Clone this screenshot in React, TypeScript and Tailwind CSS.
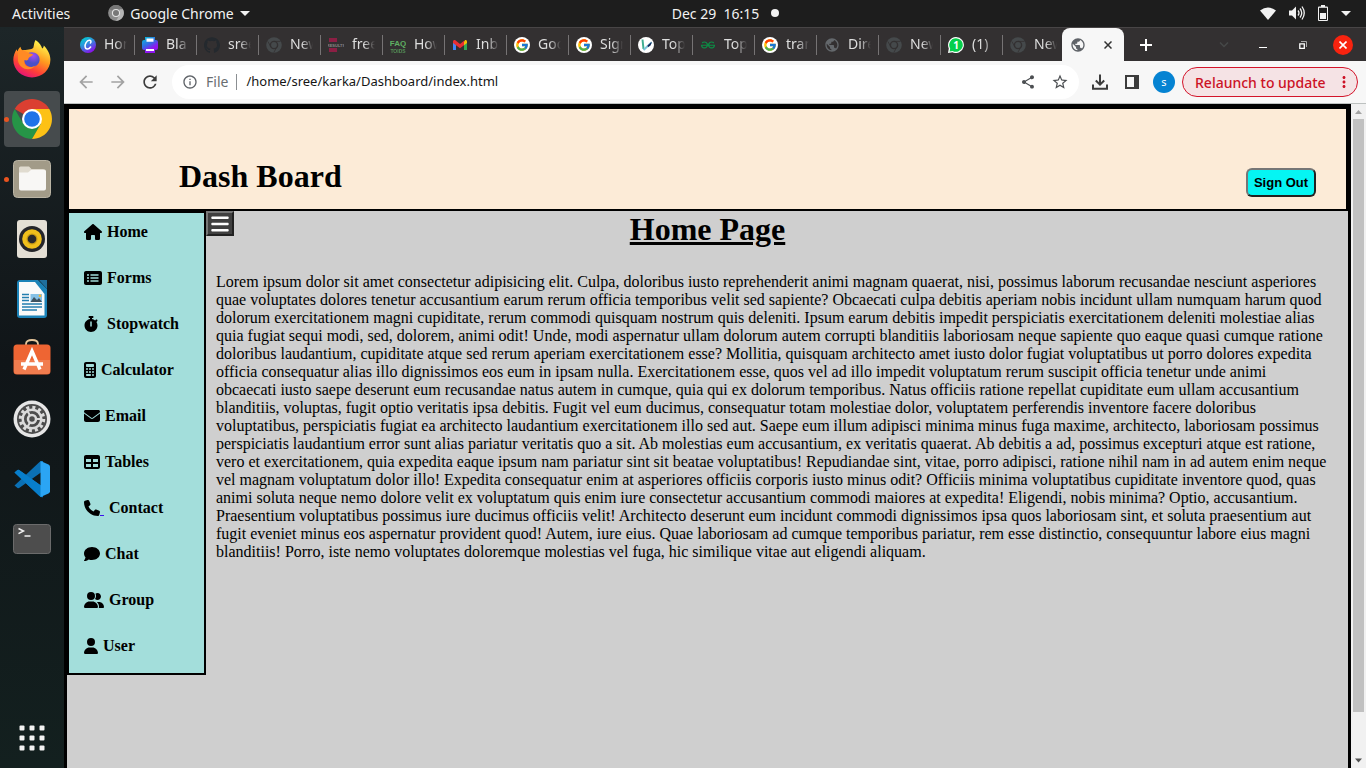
import type { ReactNode } from "react";
import {
  FaBars, FaCalculator, FaComment, FaEnvelope, FaHouse, FaPhone,
  FaRectangleList, FaStopwatch, FaTable, FaUser, FaUserGroup,
} from "react-icons/fa6";
import { FcGoogle } from "react-icons/fc";
import { SiGithub, SiGeeksforgeeks } from "react-icons/si";
import {
  MdArrowBack, MdArrowForward, MdInfoOutline, MdMoreVert, MdPublic, MdRefresh, MdShare, MdStarBorder,
} from "react-icons/md";

function ChromeMono({ className }: { className: string }) {
  return (
    <svg viewBox="0 0 16 16" className={className} aria-hidden="true">
      <circle cx="8" cy="8" r="7.8" fill="currentColor" />
      <g fill="none" stroke="#333031">
        <circle cx="8" cy="8" r="3.6" strokeWidth="1.400" />
        <path d="M8 4.400h6.500M4.900 9.800 1.800 4.400M11 9.800 7.800 15.500" strokeWidth=".8" />
      </g>
    </svg>
  );
}

function ChromeAppIcon() {
  return (
    <svg viewBox="0 0 16 16" className="size-4" aria-hidden="true">
      <circle cx="8" cy="8" r="7.900" fill="#8c8c8c" />
      <path d="M8 8 1.200 4A7.900 7.900 0 0 1 14.800 4z" fill="#777" />
      <path d="M14.900 4.200A7.900 7.900 0 0 1 8 15.900L11.500 10V4.200z" fill="#b4b4b4" />
      <circle cx="8" cy="8" r="4.100" fill="#e4e4e4" />
      <circle cx="8" cy="8" r="3" fill="#777" />
    </svg>
  );
}

function CanvaIcon() {
  return (
    <svg viewBox="0 0 16 16" className="size-4">
      <defs>
        <linearGradient id="canva" x1="0" y1="0" x2=".6" y2="1">
          <stop offset=".1" stopColor="#00cfd2" />
          <stop offset=".5" stopColor="#2f8edc" />
          <stop offset="1" stopColor="#8a10ea" />
        </linearGradient>
      </defs>
      <circle cx="8" cy="8" r="8" fill="url(#canva)" />
      <path d="M10.400 6c1.200-1.200.5-2.900-1.200-2.700C6.700 3.600 4.800 7 5.100 9.700c.3 3 3.600 3.200 5.500.3" fill="none" stroke="#fff" strokeWidth="1.500" strokeLinecap="round" />
    </svg>
  );
}

function PrinterIcon() {
  return (
    <svg viewBox="0 0 16 16" className="size-4">
      <defs>
        <linearGradient id="print" x1="0" y1="0" x2=".6" y2="1">
          <stop offset="0" stopColor="#00c8d6" />
          <stop offset=".5" stopColor="#3569e4" />
          <stop offset=".8" stopColor="#8f16ef" />
        </linearGradient>
      </defs>
      <path d="M3 0h10v3h1q2 0 2 2v6q0 2-2 2h-1v3H3v-3H2q-2 0-2-2V5q0-2 2-2h1z" fill="url(#print)" />
      <path d="M4.500 1.500h7v3.300h-7zM4 12h8v2H4z" fill="#fff" />
    </svg>
  );
}

function GmailIcon() {
  return (
    <svg viewBox="0 0 16 16" className="size-4">
      <path d="M1 4v9h3V7z" fill="#4285f4" />
      <path d="M15 4v9h-3V7z" fill="#34a853" />
      <path d="M12 4.500 13.200 3q1.800-.5 1.800 1.500V6l-3 2.300z" fill="#fbbc04" />
      <path d="M1 4.500Q1 2.500 3 3l5 4 4-3.200v4.500l-4 3-7-5.200z" fill="#ea2e32" />
    </svg>
  );
}

function GoogleIcon() {
  return (
    <span className="flex size-4 items-center justify-center rounded-full bg-white">
      <FcGoogle className="size-3.5" />
    </span>
  );
}

function LeafIcon() {
  return (
    <svg viewBox="0 0 16 16" className="size-4">
      <circle cx="8" cy="8" r="8" fill="#fff" />
      <path d="M4.500 2.500 5.500 12" fill="none" stroke="#3fae93" strokeWidth="2" />
      <path d="M5.500 13 13.500 5.500" stroke="#7cc4da" strokeWidth="2" />
      <path d="m9.500 8.500 4.500-4-1.500 4-2.500 1.800z" fill="#14285a" />
    </svg>
  );
}

function WhatsIcon() {
  return (
    <svg viewBox="0 0 16 16" className="size-4">
      <path d="M8 0a8 8 0 1 1-3.600 15.200L0 16l.8-4.600A8 8 0 0 1 8 0Z" fill="#fff" />
      <path d="M8 1.200a6.800 6.800 0 1 1-3.400 12.700l-3 .6.600-3A6.800 6.800 0 0 1 8 1.200Z" fill="#05cf4b" />
      <text x="8.200" y="12" fill="#fff" fontSize="10" fontWeight="700" fontFamily="Noto Sans" textAnchor="middle">1</text>
    </svg>
  );
}

function FaqIcon() {
  return (
    <svg viewBox="0 0 16 16" className="size-4">
      <g fill="#5fae62" fontFamily="Liberation Sans" fontWeight="700" textAnchor="middle">
        <text x="8" y="9" fontSize="8">FAQ</text>
        <text x="8" y="15.500" fontSize="5" opacity=".75">TOIDS</text>
      </g>
    </svg>
  );
}

function ResultsIcon() {
  return (
    <svg viewBox="0 0 16 16" className="size-4">
      <path d="M1 1h8v4H1zM1 11h8v4H1z" fill="#8c1f44" />
      <text x="8" y="10" fill="#8a8587" fontSize="4" fontWeight="700" fontFamily="Liberation Sans" textAnchor="middle">RESULTS</text>
    </svg>
  );
}

const dimChrome = <ChromeMono className="size-4 text-[#45494b]" />;

const tabs: { icon: ReactNode; title: string }[] = [
  { icon: <CanvaIcon />, title: "Home" },
  { icon: <PrinterIcon />, title: "Bla" },
  { icon: <SiGithub className="size-4 text-[#24292e]" />, title: "sree" },
  { icon: dimChrome, title: "New" },
  { icon: <ResultsIcon />, title: "free" },
  { icon: <FaqIcon />, title: "How" },
  { icon: <GmailIcon />, title: "Inb" },
  { icon: <GoogleIcon />, title: "Goo" },
  { icon: <GoogleIcon />, title: "Sign" },
  { icon: <LeafIcon />, title: "Top" },
  { icon: <SiGeeksforgeeks className="size-3.5 text-[#0d8c45]" />, title: "Top" },
  { icon: <GoogleIcon />, title: "tran" },
  { icon: <MdPublic className="size-4 text-[#64686c]" />, title: "Dire" },
  { icon: dimChrome, title: "New" },
  { icon: <WhatsIcon />, title: "(1)" },
  { icon: dimChrome, title: "New" },
];

function TopBar() {
  return (
    <header className="grid h-[27px] shrink-0 grid-cols-3 items-center bg-[#1d1d1d] pr-[15px] pb-px pl-3 text-[14px] text-[#f2f2f2]">
      <div className="flex items-center">
        <button>Activities</button>
        <button className="ml-[38px] flex items-center gap-1.5">
          <ChromeAppIcon />
          Google Chrome
          <svg viewBox="0 0 10 5" className="h-[5px] w-2.5"><path d="M0 0h10L5 5z" fill="#f2f2f2" /></svg>
        </button>
      </div>
      <button className="flex items-center justify-center gap-3 pl-[88px] whitespace-pre">
        Dec 29  16:15
        <span className="size-2 rounded-full bg-[#f2f2f2]" />
      </button>
      <div className="flex items-center justify-end gap-[13px]">
        <svg viewBox="0 0 16 13" className="h-[13px] w-4"><path d="M0 3.500Q8-2.500 16 3.500L8 13z" fill="#f2f2f2" /></svg>
        <svg viewBox="0 0 16 16" className="size-4" fill="none" stroke="#f2f2f2" strokeWidth="1.300">
          <path d="M0 5.500h3L7 1.500v13l-4-4H0z" fill="#f2f2f2" stroke="none" />
          <path d="M9 5.500q2 2.500 0 5M11 3.500q3.500 4.500 0 9M13 1.500q4.500 6.500 0 13" />
        </svg>
        <svg viewBox="0 0 10 16" className="h-4 w-2.5">
          <path d="M3 0h4v1.500h2q1 0 1 1V15q0 1-1 1H1q-1 0-1-1V2.500q0-1 1-1h2z" fill="#f2f2f2" />
          <path d="M1 2.800h8V15H1z" fill="#1d1d1d" />
          <path d="M2 8h6v6H2z" fill="#f2f2f2" />
        </svg>
        <svg viewBox="0 0 10 5" className="h-[5px] w-2.5"><path d="M0 0h10L5 5z" fill="#f2f2f2" /></svg>
      </div>
    </header>
  );
}

const firefox = (
  <svg viewBox="0 0 40 40" className="size-10">
    <defs>
      <linearGradient id="fox" x1=".8" y1="0" x2=".3" y2="1">
        <stop offset=".1" stopColor="#fff04a" />
        <stop offset=".45" stopColor="#ff9a1f" />
        <stop offset=".75" stopColor="#ff4037" />
        <stop offset="1" stopColor="#e3107c" />
      </linearGradient>
      <radialGradient id="foxGlobe" cx=".6" cy=".25">
        <stop offset="0" stopColor="#a44df2" />
        <stop offset="1" stopColor="#4a50c8" />
      </radialGradient>
    </defs>
    <path d="M23.500 1c4 2.600 6 6 6.700 8.600 1-.8 1.500-2 1.600-3.200 4 4 6.600 9 6.600 14.400C38.400 31 30 38.500 20 38.500S1.300 31 1.300 20.800c0-4 1.500-7.500 3.200-10.600.3 1 .8 1.600 1.300 2 .4-1.800 1.300-3.200 2.700-4.400.2 1.500.8 2.500 1.800 3.400 4.200-.6 9.200-.4 11-2.500.8-2 .6-5.200 2.200-7.700Z" fill="url(#fox)" />
    <path d="M12.500 18c2-5 9-6.500 13-2.500 4.500 4.500 1.500 12.500-6 12.500-5 0-9-5-7-10Z" fill="url(#foxGlobe)" />
    <path d="M6 12c4-2 8 0 10.500 2 1.500.8 4 .8 4.500 1.200-.5 2.300-3.500 2.200-4.500 4 .2 2-2 2.800-4 1.700-1.500 6.100 6 9.600 11.500 5.100C19 33 8 31 6 22z" fill="#ff8a24" />
  </svg>
);

const chrome = (
  <svg viewBox="0 0 40 40" className="size-10">
    <path d="M20 20 2.700 10A20 20 0 0 1 37.300 10z" fill="#db3f31" />
    <path d="M2.700 10A20 20 0 0 0 20 40l9-15H11.500z" fill="#269547" />
    <path d="M37.300 10A20 20 0 0 1 20 40l8.700-15L20 10z" fill="#fdc115" />
    <circle cx="20" cy="20" r="10" fill="#fff" />
    <circle cx="20" cy="20" r="7.800" fill="#1f73e8" />
  </svg>
);

const files = (
  <svg viewBox="0 0 40 40" className="size-10">
    <rect x="1.500" y="1.500" width="37" height="37" rx="4" fill="#a29b88" stroke="#bab4a4" />
    <path d="M7 9q0-1.500 1.500-1.500h8.500l2.500 2.500H31q3 0 3 3v5H7z" fill="#e0dbcf" />
    <path d="M7 13.500h9l3-2.500h13.500q1.500 0 1.500 1.500v17q0 2-2 2H9q-2 0-2-2z" fill="#f8f7f5" />
  </svg>
);

const rhythmbox = (
  <svg viewBox="0 0 40 40" className="size-10">
    <rect x="5" y="1" width="30" height="38" rx="3" fill="#e4dfd5" />
    <circle cx="20" cy="20" r="13" fill="#25252a" />
    <circle cx="20" cy="20" r="9.800" fill="#f0bf1c" />
    <circle cx="20" cy="20" r="5.500" fill="#c79a16" />
    <circle cx="20" cy="20" r="4.300" fill="#29292b" />
  </svg>
);

const writer = (
  <svg viewBox="0 0 40 40" className="size-10">
    <path d="M5 4q0-3 3-3h18l9 9v26q0 3-3 3H8q-3 0-3-3z" fill="#1c83b8" />
    <path d="M27 1h8v9z" fill="#1f6f9d" />
    <path d="M7 3h16l9.500 12v21.500H7z" fill="#fafafa" />
    <g stroke="#247eaf" strokeWidth="1.400"><path d="M10 15.500h7M10 18.500h7M10 21.500h7M10 25h20M10 28h20M10 31h15" /></g>
    <path d="M18.500 15H30v8H18.500z" fill="#85c1e6" />
    <path d="m18.500 23 3.500-5 3 3 2-2 3 4z" fill="#3e5260" />
    <circle cx="28" cy="16.800" r="1.300" fill="#f3b42f" />
  </svg>
);

const software = (
  <svg viewBox="0 0 40 40" className="size-10">
    <path d="M14 8V5q0-4 6-4t6 4v3" fill="none" stroke="#e6c69b" strokeWidth="1.800" />
    <rect x="1.500" y="5.500" width="37" height="30" rx="3.500" fill="#ee6533" />
    <path d="M2 21h36v11q0 3-3 3H5q-3 0-3-3z" fill="#f17c4e" />
    <path d="m12 30.500 8-18.500 8 18.500M9 25h22" fill="none" stroke="#fff" strokeWidth="3.300" />
  </svg>
);

const settings = (
  <svg viewBox="0 0 40 40" className="size-10">
    <circle cx="20" cy="20" r="18.500" fill="#e6e6e6" />
    <circle cx="20" cy="20" r="15" fill="#4c4c4c" />
    <circle cx="20" cy="20" r="11.500" fill="none" stroke="#dadada" strokeWidth="3.500" strokeDasharray="3 3.020" />
    <circle cx="20" cy="20" r="9.300" fill="none" stroke="#dadada" strokeWidth="2.500" />
    <circle cx="20" cy="20" r="4" fill="none" stroke="#dadada" strokeWidth="2.500" />
    <path d="M24 20h6M18 16.500l-3-5.200M18 23.500l-3 5.200" stroke="#dadada" strokeWidth="2" />
  </svg>
);

const vscode = (
  <svg viewBox="0 0 40 40" className="size-10">
    <path d="m2.500 13.500 3-2.500q1-.5 2 .2L31 28v10q-2 .5-3.500-1z" fill="#087ecb" />
    <path d="m2.500 26.500 3 2.500q1 .5 2-.2L31 12V2q-2-.5-3.500 1z" fill="#0b70b4" />
    <path d="m2.500 13.500 3-2.500q1-.5 2 .2L31 28v10q-2 .5-3.500-1z" fill="#087ecb" />
    <path d="m28.500 2 8 3.500q1.500.8 1.500 2v25q0 1.200-1.500 2l-8 3.500z" fill="#2ba5f4" />
  </svg>
);

const terminal = (
  <svg viewBox="0 0 40 40" className="size-10">
    <rect x="1.500" y="5.500" width="37" height="29" rx="3" fill="#4d4d4d" stroke="#6b6b6b" />
    <path d="m6.500 9.500 5 2.500-5 2.700M12.500 17h6" fill="none" stroke="#f0f0f0" strokeWidth="1.500" />
  </svg>
);

const dockApps = [
  { name: "Firefox", icon: firefox, open: false, active: false },
  { name: "Chrome", icon: chrome, open: true, active: true },
  { name: "Files", icon: files, open: true, active: false },
  { name: "Rhythmbox", icon: rhythmbox, open: false, active: false },
  { name: "Writer", icon: writer, open: false, active: false },
  { name: "Software", icon: software, open: false, active: false },
  { name: "Settings", icon: settings, open: false, active: false },
  { name: "Code", icon: vscode, open: false, active: false },
  { name: "Terminal", icon: terminal, open: false, active: false },
];

function Dock() {
  return (
    <nav aria-label="Dock" className="flex w-16 shrink-0 flex-col items-center gap-1 bg-linear-to-b from-[#1d2628] via-[#101518] via-45% to-[#13201f] pt-1 pb-0.5">
      {dockApps.map((app) => (
        <button
          key={app.name}
          aria-label={app.name}
          className={`relative flex size-14 items-center justify-center rounded-sm ${app.active ? "bg-[#464b4d]" : ""}`}
        >
          {app.open && <span className="absolute left-0 size-[5px] rounded-full bg-[#e95420]" />}
          {app.icon}
        </button>
      ))}
      <button aria-label="Show applications" className="mt-auto flex size-14 items-center justify-center">
        <svg viewBox="0 0 26 26" className="size-[26px]" fill="#f2f2f2">
          {[0.5, 10.5, 20.5].map((y) => [0.5, 10.5, 20.5].map((x) => <rect key={`${x}-${y}`} x={x} y={y} width="5" height="5" rx="1" />))}
        </svg>
      </button>
    </nav>
  );
}

function TabStrip() {
  return (
    <div className="flex h-[34px] shrink-0 items-center border-t border-[#484546] bg-[#333031] pl-2 text-[14px] text-[#dedede]">
      {tabs.map((tab, i) => (
        <button
          key={i}
          className={`flex h-5 items-center gap-2 border-l pl-[7px] ${i === 0 ? "border-transparent" : "border-[#767374]"} ${i === tabs.length - 1 ? "w-[60px]" : "w-[62px]"}`}
        >
          <span className="flex size-4 shrink-0 items-center justify-center">{tab.icon}</span>
          <span className="w-[23px] overflow-hidden pb-0.5 text-left whitespace-nowrap [mask-image:linear-gradient(to_right,black_50%,transparent)]">
            {tab.title}
          </span>
        </button>
      ))}
      <div className="flex h-full w-[62px] items-center justify-between rounded-t-lg bg-[#f7f7f7] px-2">
        <MdPublic className="size-4 text-[#5f6368]" />
        <button aria-label="Close tab" className="flex size-4 items-center justify-center">
          <svg viewBox="0 0 8 8" className="size-2"><path d="m.5.5 7 7m0-7-7 7" stroke="#333" strokeWidth="1.500" /></svg>
        </button>
      </div>
      <button aria-label="New tab" className="ml-4">
        <svg viewBox="0 0 12 12" className="size-3"><path d="M6 0v12M0 6h12" stroke="#fff" strokeWidth="2" /></svg>
      </button>
      <div className="mr-[13px] ml-auto flex items-center">
        <button aria-label="Search tabs" className="mr-[30px]">
          <svg viewBox="0 0 10 6" className="h-1.5 w-2.5"><path d="m1 .5 4 4 4-4" fill="none" stroke="#464848" strokeWidth="1.500" /></svg>
        </button>
        <button aria-label="Minimize" className="mr-8">
          <svg viewBox="0 0 8 8" className="size-2"><path d="M0 6.500h8" stroke="#fff" /></svg>
        </button>
        <button aria-label="Restore" className="mr-[26px]">
          <svg viewBox="0 0 8 8" className="size-2" fill="none"><path d="M2 .5h5.500V6" stroke="#aaa" /><path d="M.8 2.800h4.500v4.500H.8z" stroke="#fff" strokeWidth="1.300" /></svg>
        </button>
        <button aria-label="Close window" className="flex size-5 items-center justify-center rounded-full bg-[#f8230f]">
          <svg viewBox="0 0 8 8" className="size-2"><path d="m.5.5 7 7m0-7-7 7" stroke="#fff" strokeWidth="1.600" /></svg>
        </button>
      </div>
    </div>
  );
}

function Toolbar() {
  return (
    <div className="flex h-[43px] shrink-0 items-center border-b border-[#bdc1c0] bg-[#f7f7f7] pr-2 pl-3 text-[14px]">
      <div className="flex items-center gap-3 text-[#a2a2a2]">
        <button aria-label="Back"><MdArrowBack className="size-5" /></button>
        <button aria-label="Forward"><MdArrowForward className="size-5" /></button>
        <button aria-label="Reload"><MdRefresh className="size-5 text-[#3c3c3c]" /></button>
      </div>
      <div className="ml-3 flex h-[34px] flex-1 items-center rounded-full bg-white pr-2.5 pl-2.5">
        <MdInfoOutline className="size-4 text-[#5f6368]" />
        <label htmlFor="address" className="ml-2 border-r border-[#8b8f92] pr-2 leading-4 text-[#6a6e72]">File</label>
        <input
          id="address"
          defaultValue="/home/sree/karka/Dashboard/index.html"
          className="ml-[9px] min-w-0 flex-1 bg-transparent text-[13px] text-[#151515] outline-none"
        />
        <div className="flex items-center gap-[15px] text-[#4c4f52]">
          <button aria-label="Share"><MdShare className="size-4" /></button>
          <button aria-label="Bookmark"><MdStarBorder className="size-[18px]" /></button>
        </div>
      </div>
      <button aria-label="Downloads" className="ml-3">
        <svg viewBox="0 0 18 18" className="size-[18px]" fill="none" stroke="#3c3c3c" strokeWidth="2"><path d="M9 1.500v10M4.800 7.500 9 11.700l4.200-4.200M2 11.500v4.300h14v-4.300" /></svg>
      </button>
      <button aria-label="Side panel" className="ml-4">
        <svg viewBox="0 0 14 14" className="size-3.5"><path d="M1 1h12v12H1z" fill="none" stroke="#3c3c3c" strokeWidth="2" /><path d="M9 1h5v12H9z" fill="#3c3c3c" /></svg>
      </button>
      <button className="ml-3.5 size-[22px] rounded-full bg-[#0583d2] text-[11px] text-white">s</button>
      <button className="ml-[7px] flex h-[30px] w-[176px] items-center justify-between rounded-full border border-[#d3142a] bg-[#f5e3e5] pr-1 pl-3 font-medium whitespace-nowrap text-[#cc1226]">
        Relaunch to update
        <MdMoreVert className="size-[18px] shrink-0" />
      </button>
    </div>
  );
}

const links = [
  { icon: <FaHouse className="h-4 w-[18px]" />, label: "Home", gap: "ml-[5px]" },
  { icon: <FaRectangleList className="h-4 w-[18px]" />, label: "Forms", gap: "ml-[5px]" },
  { icon: <FaStopwatch className="h-4 w-3.5" />, label: "Stopwatch", gap: "ml-[9px]" },
  { icon: <FaCalculator className="h-4 w-3" />, label: "Calculator", gap: "ml-[5px]" },
  { icon: <FaEnvelope className="size-4" />, label: "Email", gap: "ml-[5px]" },
  { icon: <FaTable className="size-4" />, label: "Tables", gap: "ml-[5px]" },
  { icon: <FaPhone className="size-4" />, label: "Contact", gap: "ml-[5px]" },
  { icon: <FaComment className="size-4" />, label: "Chat", gap: "ml-[5px]" },
  { icon: <FaUserGroup className="h-4 w-5" />, label: "Group", gap: "ml-[5px]" },
  { icon: <FaUser className="h-4 w-3.5" />, label: "User", gap: "ml-[5px]" },
];

const body =
  "Lorem ipsum dolor sit amet consectetur adipisicing elit. Culpa, doloribus iusto reprehenderit animi magnam quaerat, nisi, possimus laborum recusandae nesciunt asperiores quae voluptates dolores tenetur accusantium earum rerum officia temporibus velit sed sapiente? Obcaecati culpa debitis aperiam nobis incidunt ullam numquam harum quod dolorum exercitationem magni cupiditate, rerum commodi quisquam nostrum quis deleniti. Ipsum earum debitis impedit perspiciatis exercitationem deleniti molestiae alias quia fugiat sequi modi, sed, dolorem, animi odit! Unde, modi aspernatur ullam dolorum autem corrupti blanditiis laboriosam neque sapiente quo eaque quasi cumque ratione doloribus laudantium, cupiditate atque sed rerum aperiam exercitationem esse? Mollitia, quisquam architecto amet iusto dolor fugiat voluptatibus ut porro dolores expedita officia consequatur alias illo dignissimos eos eum in ipsam nulla. Exercitationem esse, quos vel ad illo impedit voluptatum rerum suscipit officia tenetur unde animi obcaecati iusto saepe deserunt eum recusandae natus autem in cumque, quia qui ex dolorum temporibus. Natus officiis ratione repellat cupiditate eum ullam accusantium blanditiis, voluptas, fugit optio veritatis ipsa debitis. Fugit vel eum ducimus, consequatur totam molestiae dolor, voluptatem perferendis inventore facere doloribus voluptatibus, perspiciatis fugiat ea architecto laudantium exercitationem illo sed aut. Saepe eum illum adipisci minima minus fuga maxime, architecto, laboriosam possimus perspiciatis laudantium error sunt alias pariatur veritatis quo a sit. Ab molestias eum accusantium, ex veritatis quaerat. Ab debitis a ad, possimus excepturi atque est ratione, vero et exercitationem, quia expedita eaque ipsum nam pariatur sint sit beatae voluptatibus! Repudiandae sint, vitae, porro adipisci, ratione nihil nam in ad autem enim neque vel magnam voluptatum dolor illo! Expedita consequatur enim at asperiores officiis corporis iusto minus odit? Officiis minima voluptatibus cupiditate inventore quod, quas animi soluta neque nemo dolore velit ex voluptatum quis enim iure consectetur accusantium commodi maiores at expedita! Eligendi, nobis minima? Optio, accusantium. Praesentium voluptatibus possimus iure ducimus officiis velit! Architecto deserunt eum incidunt commodi dignissimos ipsa quos laboriosam sint, et soluta praesentium aut fugit eveniet minus eos aspernatur provident quod! Autem, iure eius. Quae laboriosam ad cumque temporibus pariatur, rem esse distinctio, consequuntur labore eius magni blanditiis! Porro, iste nemo voluptates doloremque molestias vel fuga, hic similique vitae aut eligendi aliquam.";

function Dashboard() {
  return (
    <div className="flex min-w-0 flex-1 flex-col border-x-[3px] border-t-[3px] border-black bg-[#cfcfcf] font-['Liberation_Serif',serif] text-black">
      <header className="flex h-[104px] shrink-0 items-end justify-between border-2 border-black bg-[#fcebd7] pr-[30px] pb-3 pl-[110px]">
        <h1 className="text-[32px] leading-[42px] font-bold">Dash Board</h1>
        <button className="h-[29px] w-[70px] rounded-md border-2 border-t-[#767676] border-r-[#212121] border-b-[#212121] border-l-[#767676] bg-[#05f5f3] font-['Liberation_Sans',sans-serif] text-[13px] font-bold whitespace-nowrap">
          Sign Out
        </button>
      </header>
      <div className="flex min-h-0 flex-1 items-start">
        <nav aria-label="Pages" className="w-[139px] shrink-0 border-2 border-black bg-[#a3dedb]">
          {links.map((link) => (
            <a key={link.label} href="#" className="flex h-[46px] items-center pb-2 pl-[15px] text-[16px] font-bold">
              {link.icon}
              {link.label === "Contact" && <span className="mt-3.5 h-px w-1 bg-[#3a10ee]" />}
              <span className={link.gap}>{link.label}</span>
            </a>
          ))}
        </nav>
        <main className="relative min-w-0 flex-1">
          <button aria-label="Toggle menu" className="absolute top-0 left-0 flex h-[25px] w-7 items-center justify-center border-2 border-t-[#767676] border-r-[#212121] border-b-[#212121] border-l-[#767676] bg-[#404040] text-white">
            <FaBars className="h-5 w-[18px]" />
          </button>
          <h1 className="mr-[139px] text-center text-[32px] leading-[37px] font-bold underline">Home Page</h1>
          <p className="mt-[25px] pr-5 pl-2.5 text-[16px] leading-[18px]">{body}</p>
        </main>
      </div>
    </div>
  );
}

function Scrollbar() {
  return (
    <div aria-hidden="true" className="flex w-[15px] shrink-0 flex-col items-center bg-[#f1f1f1]">
      <svg viewBox="0 0 15 15" className="size-[15px] shrink-0"><path d="M4 10h7L7.500 6z" fill="#a3a3a3" /></svg>
      <div className="w-[11px] flex-9 bg-[#c1c1c1]" />
      <div className="flex-[0.62]" />
      <svg viewBox="0 0 15 15" className="size-[15px] shrink-0"><path d="M4 5.500h7l-3.500 4z" fill="#505050" /></svg>
    </div>
  );
}

export default function App() {
  return (
    <div className="flex h-screen flex-col overflow-hidden font-['Noto_Sans',sans-serif]">
      <TopBar />
      <div className="flex min-h-0 flex-1">
        <Dock />
        <div className="flex min-w-0 flex-1 flex-col">
          <TabStrip />
          <Toolbar />
          <div className="flex min-h-0 flex-1">
            <Dashboard />
            <Scrollbar />
          </div>
        </div>
      </div>
    </div>
  );
}
